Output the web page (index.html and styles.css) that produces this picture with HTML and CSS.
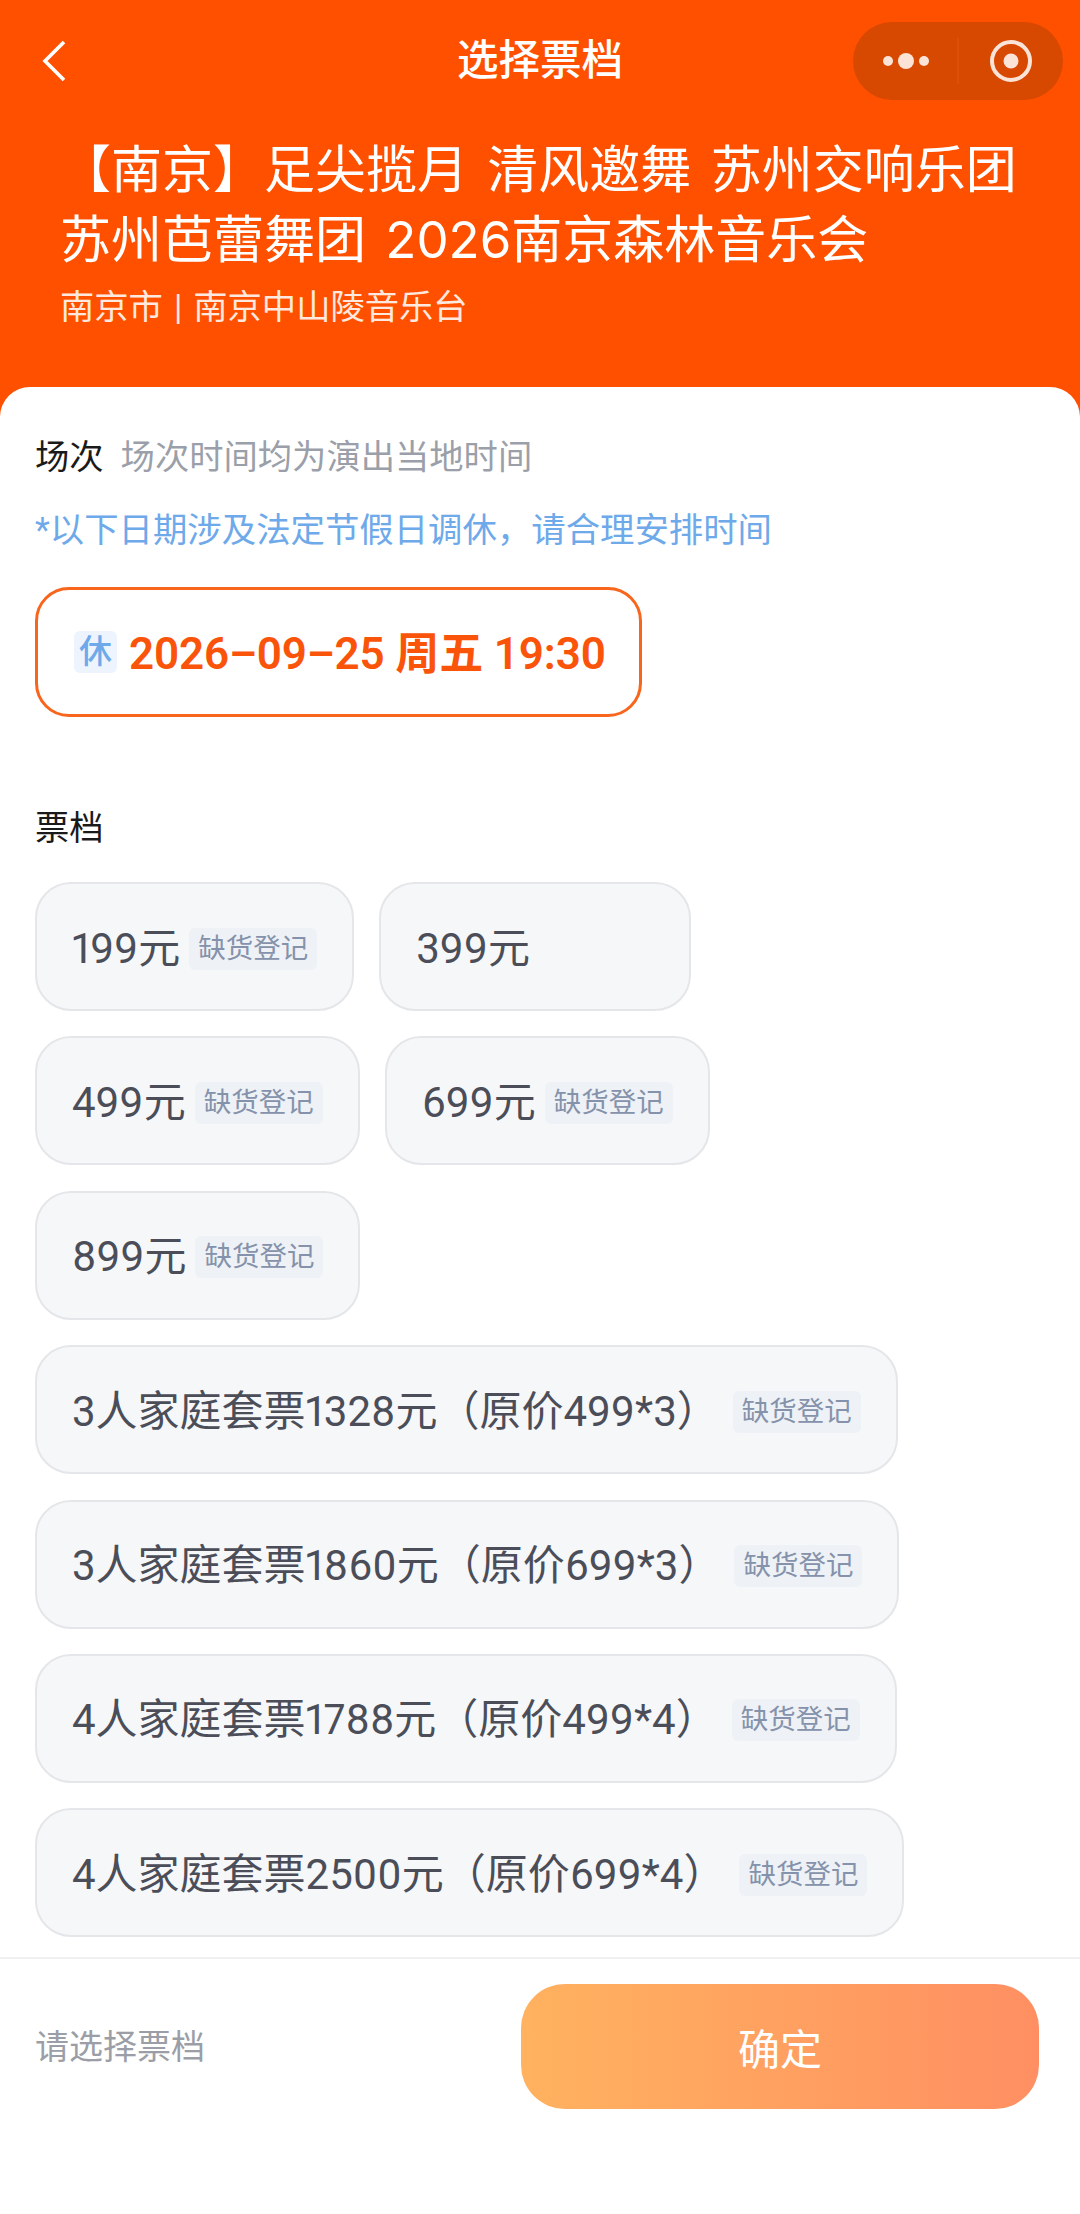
FILE: index.html
```html
<!DOCTYPE html>
<html lang="zh-CN">
<head>
    <meta charset="UTF-8">
    <meta name="viewport" content="width=device-width, initial-scale=1.0">
    <title>选择票档</title>
    <link rel="stylesheet" href="styles.css">
</head>
<body>

<header class="cabecera">
    <div class="nav">
        <svg class="volver" width="26" height="42" viewBox="0 0 26 42"><path d="M23 2 L4 21 L23 40" fill="none" stroke="#fff" stroke-width="3.6"/></svg>
        <div class="nav-titulo">选择票档</div>
        <div class="capsula">
            <svg class="capsula-puntos" width="50" height="16" viewBox="0 0 50 16"><circle cx="7" cy="8" r="5" fill="#fbe3d8"/><circle cx="25" cy="8" r="8" fill="#fbe3d8"/><circle cx="43" cy="8" r="5" fill="#fbe3d8"/></svg>
            <span class="capsula-linea"></span>
            <svg class="capsula-aro" width="44" height="44" viewBox="0 0 44 44"><circle cx="22" cy="22" r="19" fill="none" stroke="#fbe3d8" stroke-width="4"/><circle cx="22" cy="22" r="7.5" fill="#fbe3d8"/></svg>
        </div>
    </div>
    <h1 class="titulo">【南京】足尖揽月 清风邀舞 苏州交响乐团<br>苏州芭蕾舞团 2026南京森林音乐会</h1>
    <div class="lugar">南京市 | 南京中山陵音乐台</div>
</header>

<main class="hoja">
    <section class="seccion-fechas">
        <div class="fila-titulo">
            <span class="subtitulo">场次</span>
            <span class="aviso-gris">场次时间均为演出当地时间</span>
        </div>
        <div class="aviso-azul">*以下日期涉及法定节假日调休，请合理安排时间</div>
        <div class="fecha">
            <span class="fecha-tag">休</span>
            <span class="fecha-texto">2026–09–25 周五 19:30</span>
        </div>
    </section>

    <section class="seccion-precios">
        <div class="subtitulo">票档</div>
        <div class="precios">
            <div class="precio">199元<span class="registro">缺货登记</span></div>
            <div class="precio precio-libre">399元</div>
            <div class="precio">499元<span class="registro">缺货登记</span></div>
            <div class="precio">699元<span class="registro">缺货登记</span></div>
            <div class="precio">899元<span class="registro">缺货登记</span></div>
            <div class="precio precio-familia">3人家庭套票1328元（原价499*3）<span class="registro">缺货登记</span></div>
            <div class="precio precio-familia">3人家庭套票1860元（原价699*3）<span class="registro">缺货登记</span></div>
            <div class="precio precio-familia">4人家庭套票1788元（原价499*4）<span class="registro">缺货登记</span></div>
            <div class="precio precio-familia">4人家庭套票2500元（原价699*4）<span class="registro">缺货登记</span></div>
        </div>
    </section>

    <footer class="pie">
        <span class="pie-texto">请选择票档</span>
        <button class="boton-confirmar" type="button">确定</button>
    </footer>
</main>

</body>
</html>
```

FILE: styles.css
```css
/* Pagina */
body {
    margin: 0;
    height: 2214px;
    overflow: hidden;
    background-color: #ff5000;
    font-family: Roboto, "Noto Sans CJK SC", sans-serif;
    display: flex;
    flex-direction: column;
}

/* Cabecera naranja */
.cabecera {
    height: 387px;
    flex-shrink: 0;
    box-sizing: border-box;
    padding-top: 22px;
    color: #ffffff;
}

.nav {
    display: grid;
    grid-template-columns: 1fr auto 1fr;
    align-items: center;
    height: 78px;
    padding-right: 17px;
}

.volver {
    margin-left: 41px;
}

.nav-titulo {
    font-size: 41.5px;
    font-weight: 500;
    line-height: 78px;
    margin-left: 17px;
}

.capsula {
    justify-self: end;
    width: 210px;
    height: 78px;
    border-radius: 39px;
    background-color: #d74800;
    display: flex;
    align-items: center;
    box-sizing: border-box;
    padding-left: 28px;
}

.capsula-linea {
    width: 2px;
    height: 46px;
    margin-left: 26px;
    background-color: #e04f0a;
}

.capsula-aro {
    margin-left: 30px;
}

.titulo {
    margin: 35px 0 0 60px;
    font-family: Inter, "Noto Sans CJK SC", sans-serif;
    font-size: 51px;
    font-weight: 400;
    line-height: 70px;
    word-spacing: 5px;
}

.lugar {
    margin: 10px 0 0 60px;
    font-size: 34.3px;
    line-height: 44px;
    word-spacing: 2.5px;
    color: #ffe9df;
}

/* Hoja blanca */
.hoja {
    flex: 1;
    display: flex;
    flex-direction: column;
    background-color: #ffffff;
    border-radius: 30px 30px 0 0;
    padding-top: 48px;
}

.seccion-fechas {
    padding: 0 35px;
}

.fila-titulo {
    display: flex;
    align-items: center;
    gap: 17px;
    height: 44px;
}

.subtitulo {
    font-size: 34.3px;
    line-height: 44px;
    color: #1a1a1a;
}

.aviso-gris {
    font-size: 34.3px;
    line-height: 44px;
    color: #9b9fa9;
}

.aviso-azul {
    margin-top: 29px;
    font-size: 34.4px;
    line-height: 44px;
    color: #6ea9ea;
}

.fecha {
    display: inline-flex;
    align-items: center;
    gap: 12px;
    margin-top: 35px;
    box-sizing: border-box;
    width: 607px;
    height: 130px;
    padding-left: 36px;
    border: 3px solid #f8651c;
    border-radius: 34px;
}

.fecha-tag {
    width: 43px;
    height: 42px;
    border-radius: 6px;
    background-color: #edf4fd;
    color: #6ea9ea;
    font-size: 33px;
    font-weight: 500;
    line-height: 42px;
    text-align: center;
}

.fecha-texto {
    padding-top: 3px;
    font-size: 44px;
    font-weight: 600;
    letter-spacing: -0.15px;
    line-height: 50px;
    color: #f9540a;
    white-space: nowrap;
}

.seccion-precios {
    padding: 89px 35px 0;
}

.precios {
    display: flex;
    flex-wrap: wrap;
    gap: 25.4px 25px;
    margin-top: 32px;
    max-width: 900px;
}

.precio {
    display: flex;
    align-items: center;
    box-sizing: border-box;
    height: 129px;
    padding: 4px 35px 0;
    background-color: #f6f7f9;
    border: 2px solid #e5e6e9;
    border-radius: 36px;
    font-size: 42px;
    font-variant-numeric: proportional-nums;
    line-height: 50px;
    color: #4b4e58;
    white-space: nowrap;
}

.registro {
    margin-left: 9px;
    padding: 0 9px;
    height: 42px;
    border-radius: 6px;
    background-color: #eef1f5;
    font-size: 27.5px;
    line-height: 42px;
    color: #8592ab;
}

.precio-familia .registro {
    margin-left: 14px;
}

.precio-libre {
    width: 312px;
}

/* Barra inferior */
.pie {
    display: flex;
    justify-content: space-between;
    align-items: center;
    margin-top: 20px;
    padding: 25px 41px 0 35px;
    border-top: 2px solid #f0f0f1;
}

.pie-texto {
    font-size: 34px;
    line-height: 44px;
    color: #9b9ea6;
}

.boton-confirmar {
    width: 518px;
    height: 125px;
    border: none;
    border-radius: 44px;
    background: linear-gradient(90deg, #ffb25f, #ff8f62);
    color: #ffffff;
    font-family: inherit;
    font-size: 42px;
    font-weight: 400;
}
```
